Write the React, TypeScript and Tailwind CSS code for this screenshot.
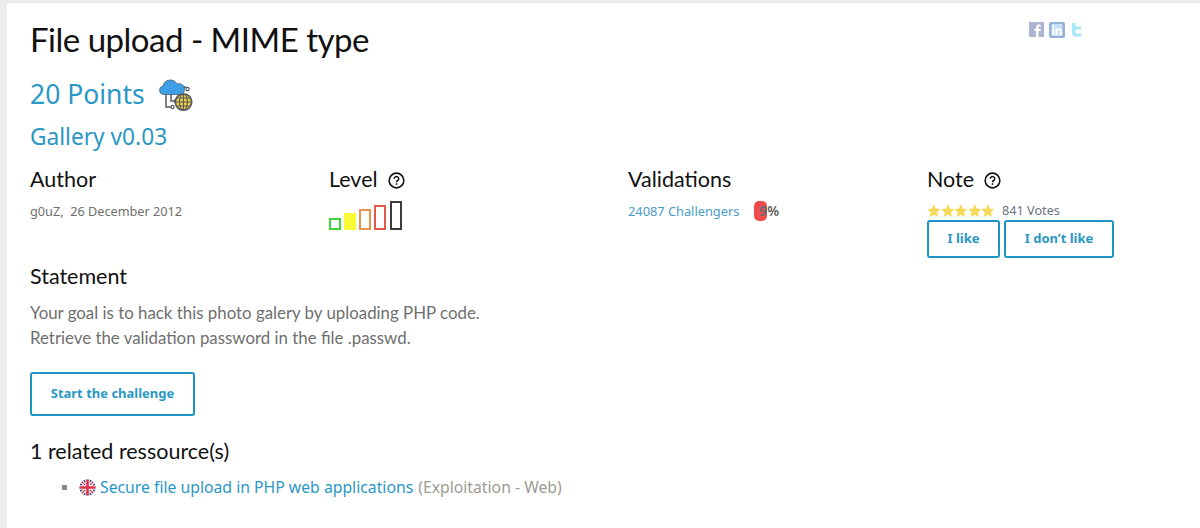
import { ReactNode } from "react";

const heading = { fontFamily: '"Lato", sans-serif' };

function HelpIcon() {
  return (
    <svg width="17" height="17" viewBox="0 0 16 16" className="ml-[10px] mt-[3px]">
      <circle cx="8" cy="8" r="6.9" fill="none" stroke="#111" strokeWidth="1.5" />
      <path d="M5.9 6.3a2.1 2 0 1 1 3.2 1.7c-.7.45-1.1.8-1.1 1.6" fill="none" stroke="#111" strokeWidth="1.4" />
      <rect x="7.3" y="10.6" width="1.5" height="1.5" fill="#111" />
    </svg>
  );
}

function CloudIcon() {
  return (
    <svg width="34" height="34" viewBox="0 0 34 34" className="ml-[14px] mt-[3px]">
      <path d="M7 16v13h5M12 16v7h4M17 9h10" fill="none" stroke="#555b66" strokeWidth="1.500" />
      <circle cx="28.500" cy="11" r="1.600" fill="none" stroke="#555b66" strokeWidth="1.200" />
      <circle cx="13.500" cy="29" r="1.600" fill="none" stroke="#555b66" strokeWidth="1.200" />
      <circle cx="17" cy="23" r="1.600" fill="none" stroke="#555b66" strokeWidth="1.200" />
      <path d="M4.500 16.500a4.300 4.300 0 0 1-.5-8.500 7.500 7.500 0 0 1 14-2 5.300 5.300 0 0 1 4 10.500z" fill="#3f9fe6" stroke="#4a5560" strokeWidth="0.700" />
      <circle cx="24.500" cy="24" r="8.200" fill="#f3cf3b" stroke="#555b66" strokeWidth="1.800" />
      <path d="M17 24h15M17.800 20h13.400M17.800 28h13.400M24.500 16v16" stroke="#555b66" strokeWidth="1.100" />
      <ellipse cx="24.500" cy="24" rx="4" ry="8" fill="none" stroke="#555b66" strokeWidth="1.100" />
    </svg>
  );
}

function SocialIcons() {
  return (
    <div className="mt-[19px] mr-[116px] flex items-start gap-[5px] opacity-50">
      <svg width="15" height="15" viewBox="0 0 15 15">
        <rect width="15" height="15" fill="#5c6fa8" />
        <path d="M9.5 15V9h2l.3-2.2H9.500V5.500c0-.7.3-1 1-1h1.300V2.500H10c-2 0-3 1.100-3 2.800v1.500H5.500V9H7v6z" fill="#fff" />
      </svg>
      <svg width="16" height="16" viewBox="0 0 16 16">
        <rect width="16" height="16" rx="2" fill="#2f66b0" />
        <rect x="2.500" y="2" width="11" height="12" rx="1" fill="#8fc5f0" />
        <rect x="3" y="6.500" width="2.200" height="6.500" fill="#fff" />
        <rect x="3" y="3.500" width="2.200" height="2" fill="#fff" />
        <path d="M6.500 6.500h2.200v1c.5-.8 1.200-1.200 2.100-1.200 1.500 0 2.200 1 2.200 2.700V13h-2.200V9.300c0-.8-.3-1.200-.9-1.200-.7 0-1.200.5-1.200 1.300V13H6.500z" fill="#fff" />
      </svg>
      <svg width="14" height="16" viewBox="0 0 14 16">
        <path d="M2 1h3.500v3.500H11v3H5.500v2.500c0 1 .6 1.500 1.500 1.500H11.500v3H6c-2.500 0-4-1.500-4-4z" fill="#55d0f5" />
      </svg>
    </div>
  );
}

function LevelBars() {
  return (
    <div className="mt-[9px] flex h-[29px] items-end gap-[3px]">
      <div className="h-[12px] w-[12px] border-2 border-[#3fd43f]" />
      <div className="h-[17px] w-[12px] bg-[#fcfc36]" />
      <div className="h-[21px] w-[12px] border-2 border-[#e8934a]" />
      <div className="h-[25px] w-[12px] border-2 border-[#e2594c]" />
      <div className="ml-px h-[29px] w-[12px] border-2 border-[#3c3c3c]" />
    </div>
  );
}

function Stars() {
  return (
    <div className="flex">
      {[0, 1, 2, 3, 4].map((i) => (
        <svg key={i} width="13.6" height="13.6" viewBox="0 0 24 24">
          <path d="M12 .5l3.500 7.500 8.200 1-6 5.700 1.600 8.100L12 18.800l-7.300 4 1.600-8.100-6-5.700 8.200-1z" fill="#f5d95c" />
        </svg>
      ))}
    </div>
  );
}

function UkFlag() {
  return (
    <svg width="17" height="17" viewBox="0 0 17 17" className="mr-[4px] mt-[4px] shrink-0">
      <defs>
        <clipPath id="flag">
          <circle cx="8.500" cy="8.500" r="8" />
        </clipPath>
      </defs>
      <g clipPath="url(#flag)">
        <rect width="17" height="17" fill="#2b3f7e" />
        <path d="M0 0l17 17M17 0L0 17" stroke="#f2f2f2" strokeWidth="3.500" />
        <path d="M0 0l17 17M17 0L0 17" stroke="#d8344a" strokeWidth="1.200" />
        <path d="M8.500 0v17M0 8.500h17" stroke="#f2f2f2" strokeWidth="4.500" />
        <path d="M8.500 0v17M0 8.500h17" stroke="#e0304a" strokeWidth="2.600" />
      </g>
    </svg>
  );
}

function Column({ title, help, children }: { title: string; help?: boolean; children: ReactNode }) {
  return (
    <div>
      <div className="flex h-[26px] items-center text-[21.500px] leading-[26px] text-[#111]" style={heading}>
        {title}
        {help && <HelpIcon />}
      </div>
      {children}
    </div>
  );
}

function OutlineButton({ children, className }: { children: ReactNode; className: string }) {
  return (
    <button className={`rounded-[3px] border-2 border-[#1b95c4] bg-white text-[13px] font-bold text-[#2a97c4] ${className}`}>
      {children}
    </button>
  );
}

export default function App() {
  return (
    <div className="h-[528px] overflow-hidden bg-[#ececec] pl-[7px] pt-[3px] font-['Noto_Sans',sans-serif]">
      <div className="h-full bg-white pl-[23px]">
        <div className="flex items-start justify-between">
          <h1 className="mt-[16px] text-[33px] leading-[40px] tracking-[-0.5px] text-[#111]" style={heading}>
            File upload - MIME type
          </h1>
          <SocialIcons />
        </div>

        <div className="mt-[16px] flex items-start">
          <span className="text-[26.500px] leading-[38px] text-[#2a97c4]">20 Points</span>
          <CloudIcon />
        </div>
        <div className="mt-[9px] text-[22.700px] leading-[30px] text-[#2a97c4]">Gallery v0.03</div>

        <div className="mt-[14px] grid grid-cols-[299px_299px_299px_1fr]">
          <Column title="Author">
            <div className="mt-[9px] text-[12.700px] leading-[20px] text-[#6f6f6f]">g0uZ,&nbsp; 26 December 2012</div>
          </Column>
          <Column title="Level" help>
            <LevelBars />
          </Column>
          <Column title="Validations">
            <div className="mt-[9px] flex items-center text-[12.800px] leading-[20px]">
              <span className="text-[#4a9cc9]">24087 Challengers</span>
              <span className="ml-[15px] text-[13.500px] font-semibold text-[#5c5c5c]">
                <span className="inline-block w-[13px] rounded-[5px] bg-[#f24b4b] pl-[5px] leading-[20px] text-[#5c6f78]">9</span>%
              </span>
            </div>
          </Column>
          <Column title="Note" help>
            <div className="mt-[12px] flex h-[14px] items-center gap-[7px] text-[12.700px] text-[#6f7580]">
              <Stars />
              <span>841 Votes</span>
            </div>
            <div className="mt-[2px] flex gap-[4px]">
              <OutlineButton className="h-[38px] w-[73px]">I like</OutlineButton>
              <OutlineButton className="h-[38px] w-[110px]">I don’t like</OutlineButton>
            </div>
          </Column>
        </div>

        <div className="mt-[5px] text-[21.500px] leading-[26px] text-[#111]" style={heading}>Statement</div>
        <p className="mt-[11px] text-[16.850px] leading-[25px] text-[#6f6f6f]" style={heading}>
          Your goal is to hack this photo galery by uploading PHP code.
          <br />
          Retrieve the validation password in the file .passwd.
        </p>

        <OutlineButton className="mt-[22px] block h-[44px] w-[165px]">Start the challenge</OutlineButton>

        <div className="mt-[22px] text-[21.500px] leading-[26px] text-[#111]" style={heading}>1 related ressource(s)</div>
        <ul className="mt-[11px] pl-[32px]">
          <li className="flex items-start text-[15.750px] leading-[24px]">
            <span className="mr-[12px] mt-[10px] h-[5px] w-[5px] bg-[#8a8a8a]" />
            <UkFlag />
            <span className="text-[#2a97c4]">Secure file upload in PHP web applications</span>
            <span className="ml-[5px] text-[#a09a94]">(Exploitation - Web)</span>
          </li>
        </ul>
      </div>
    </div>
  );
}
